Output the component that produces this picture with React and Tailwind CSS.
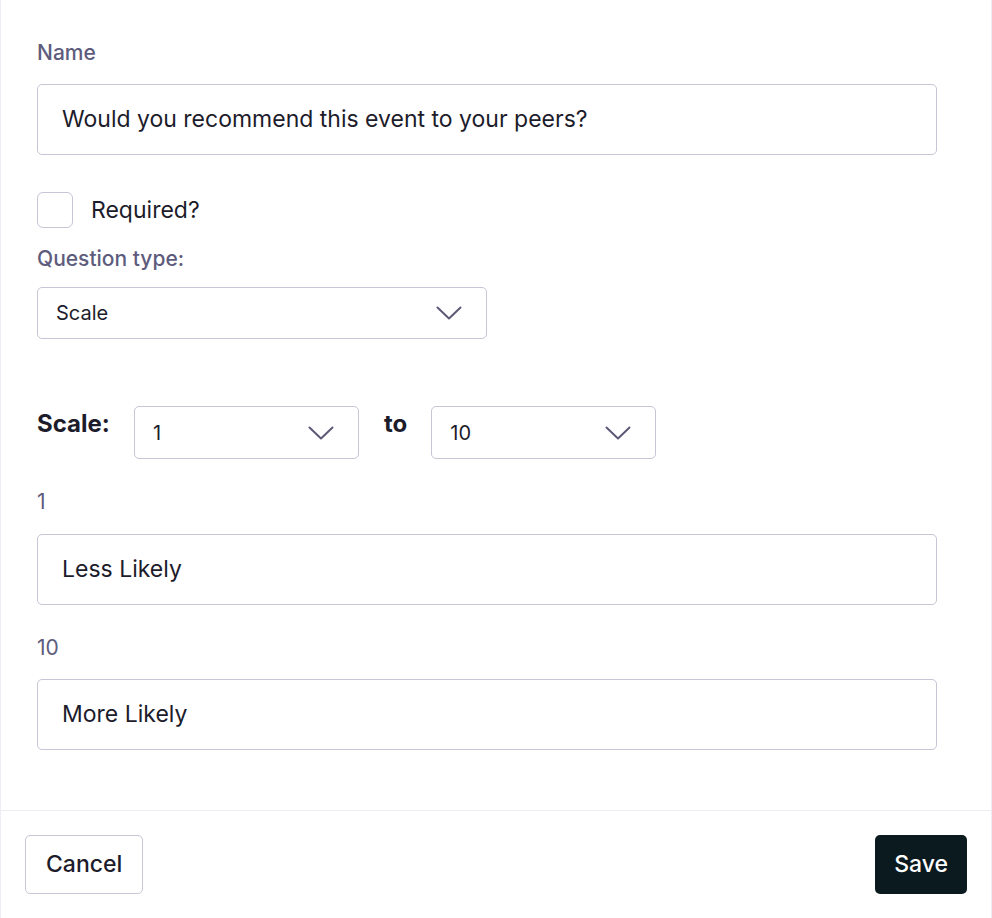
import React from 'react';

const Chevron = () => (
    <svg width="26" height="14" viewBox="0 0 26 14" fill="none" className="shrink-0">
        <path d="M1.5 1.5 L13 12.5 L24.5 1.5" stroke="#5b5977" strokeWidth="2" strokeLinecap="round" strokeLinejoin="round" />
    </svg>
);

const Select = ({ value, className }) => (
    <div className={`flex items-center justify-between border border-[#c7c5d6] rounded-[5px] pl-[18px] pr-[24px] bg-white ${className}`}>
        <span className="text-[20px] text-[#1d1c2b]">{value}</span>
        <Chevron />
    </div>
);

const TextInput = ({ value }) => (
    <div className="w-[900px] h-[71px] flex items-center border border-[#c7c5d6] rounded-[5px] px-[24px] text-[23px] text-[#1d1c2b]">
        {value}
    </div>
);

const Label = ({ children, className = '' }) => (
    <div className={`text-[21px] leading-[26px] text-[#5e5c7d] ${className}`}>{children}</div>
);

const App = () => {
    return (
        <div className="w-[992px] min-h-[918px] bg-white border-x border-[#efeef4] flex flex-col" style={{ fontFamily: 'Inter, "Liberation Sans", sans-serif' }}>
            <div className="px-[36px] pt-[40px] pb-[60px]">
                <Label className="font-medium mb-[18px]">Name</Label>
                <TextInput value="Would you recommend this event to your peers?" />

                <div className="flex items-center gap-[18px] mt-[37px]">
                    <div className="w-[36px] h-[36px] border border-[#c7c5d6] rounded-[6px]"></div>
                    <span className="text-[23px] text-[#1d1c2b]">Required?</span>
                </div>

                <Label className="font-medium mt-[18px] mb-[15px]">Question type:</Label>
                <Select value="Scale" className="w-[450px] h-[52px]" />

                <div className="flex items-start mt-[67px]">
                    <span className="text-[24px] leading-[36px] font-bold text-[#1d1c2b] w-[97px]">Scale:</span>
                    <Select value="1" className="w-[225px] h-[53px]" />
                    <span className="text-[24px] leading-[36px] font-bold text-[#1d1c2b] ml-[25px] mr-[24px]">to</span>
                    <Select value="10" className="w-[225px] h-[53px]" />
                </div>

                <Label className="mt-[30px] mb-[19px]">1</Label>
                <TextInput value="Less Likely" />

                <Label className="mt-[30px] mb-[18px]">10</Label>
                <TextInput value="More Likely" />
            </div>

            <div className="border-t border-[#ececf3] flex justify-between px-[24px] pt-[24px] pb-[24px]">
                <button className="h-[59px] px-[20px] border border-[#c7c5d6] rounded-[5px] text-[23px] font-medium text-[#1d1c2b] bg-white">Cancel</button>
                <button className="h-[59px] px-[19px] rounded-[5px] text-[23px] font-medium text-white bg-[#0b1a1e]">Save</button>
            </div>
        </div>
    );
};

export default App;
